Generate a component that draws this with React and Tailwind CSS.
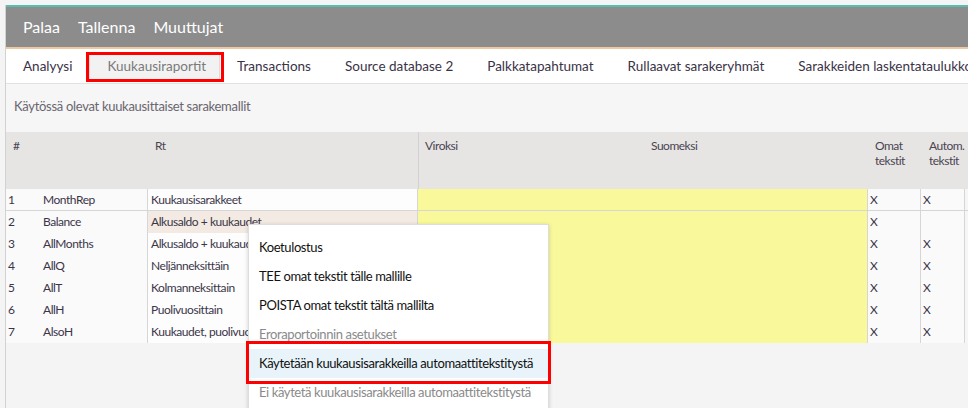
import React from "react";

const font = { fontFamily: 'Lato, "Open Sans", sans-serif' };

const rows = [
  { n: "1", code: "MonthRep", rt: "Kuukausisarakkeet", omat: "X", autom: "X" },
  { n: "2", code: "Balance", rt: "Alkusaldo + kuukaudet", omat: "X", autom: "", hover: true },
  { n: "3", code: "AllMonths", rt: "Alkusaldo + kuukaudet", omat: "X", autom: "X" },
  { n: "4", code: "AllQ", rt: "Neljänneksittäin", omat: "X", autom: "X" },
  { n: "5", code: "AllT", rt: "Kolmanneksittain", omat: "X", autom: "X" },
  { n: "6", code: "AllH", rt: "Puolivuosittain", omat: "X", autom: "X" },
  { n: "7", code: "AlsoH", rt: "Kuukaudet, puolivuosittain", omat: "X", autom: "X" },
];

const tabs = [
  "Analyysi",
  "Kuukausiraportit",
  "Transactions",
  "Source database 2",
  "Palkkatapahtumat",
  "Rullaavat sarakeryhmät",
  "Sarakkeiden laskentataulukko",
];

function Row({ r, first }) {
  return (
    <div
      className={
        "flex text-[12px] tracking-[-0.45px] text-[#3b3548] leading-[21px] " +
        (first ? "h-[22px] border-b border-[#d6d6d6]" : "h-[22px]")
      }
    >
      <div className="w-[31px] shrink-0 bg-[#fafafa] pl-[2px]">{r.n}</div>
      <div className="w-[111px] shrink-0 bg-[#fafafa] pl-[6px] border-r border-[#d6d6d6]">
        {r.code}
      </div>
      <div
        className={
          "w-[270px] shrink-0 pl-[3px] whitespace-nowrap overflow-hidden border-r border-[#d6d6d6] " +
          (r.hover ? "bg-[#f3ebe3]" : "bg-[#fdfdfd]")
        }
      >
        {r.rt}
      </div>
      <div className="w-[450px] shrink-0 bg-[#f9f99b] border-r border-[#d6d6d6]" />
      <div className="w-[53px] shrink-0 bg-[#fafafa] pl-[2px] border-r border-[#d6d6d6]">
        {r.omat}
      </div>
      <div className="w-[44px] shrink-0 bg-[#fafafa] pl-[2px] border-r border-[#d6d6d6]">
        {r.autom}
      </div>
    </div>
  );
}

export default function App() {
  return (
    <div
      className="relative w-[968px] h-[408px] overflow-hidden bg-[#f4f4f4] pl-[5px] pt-[5px]"
      style={font}
    >
      <div className="h-full border-l border-[#d2d2d2] bg-[#f5f6f5] flex flex-col">
        {/* top bar */}
        <div className="h-[44px] shrink-0 bg-[#8c8c8c] border-t-2 border-t-[#5bbcb0] border-b-2 border-b-[#efc8a0] flex items-center pl-[17px] gap-[18px] text-white text-[16px]">
          <span>Palaa</span>
          <span>Tallenna</span>
          <span>Muuttujat</span>
        </div>
        {/* tabs */}
        <div className="h-[35px] shrink-0 bg-white border-b border-[#e2e2e2] flex items-center whitespace-nowrap overflow-hidden text-[13.5px] text-[#3a3346]">
          {tabs.map((t, i) =>
            i === 1 ? (
              <div
                key={t}
                className="relative h-[28px] flex items-center pl-[17px] pr-[13px] bg-[#f2f2f2] border border-[#dcdcdc] text-[#7a7a7a]"
              >
                {t}
                <div className="absolute -left-[4px] -right-[5px] -top-[1px] -bottom-[3px] border-[3px] border-[#ff0000]" />
              </div>
            ) : (
              <div key={t} className="h-[28px] flex items-center px-[17px]">
                {t}
              </div>
            )
          )}
        </div>
        {/* subtitle */}
        <div className="h-[48px] shrink-0 flex items-center pl-[8px] pb-[2px] text-[13px] tracking-[-0.3px] text-[#6a6570]">
          Käytössä olevat kuukausittaiset sarakemallit
        </div>
        {/* table header */}
        <div className="h-[57px] shrink-0 bg-[#e6e5e3] flex text-[12px] tracking-[-0.5px] text-[#4a4452] leading-[15px]">
          <div className="w-[142px] shrink-0 pl-[7px] pt-[6px]">#</div>
          <div className="w-[270px] shrink-0 pl-[7px] pt-[6px]">Rt</div>
          <div className="w-[451px] shrink-0 border-l border-[#d2d2d2] flex pt-[6px]">
            <div className="w-[226px] pl-[6px]">Viroksi</div>
            <div className="pl-[6px]">Suomeksi</div>
          </div>
          <div className="w-[53px] shrink-0 pl-[6px] pt-[6px]">
            Omat
            <br />
            tekstit
          </div>
          <div className="flex-1 pl-[7px] pt-[6px]">
            Autom.
            <br />
            tekstit
          </div>
        </div>
        {/* rows */}
        <div className="shrink-0">
          {rows.map((r, i) => (
            <Row key={r.n} r={r} first={i === 0} />
          ))}
        </div>
        <div className="flex-1 bg-[#f4f4f4]" />
      </div>

      {/* context menu */}
      <div className="absolute left-[248px] top-[224px] w-[301px] h-[200px] bg-white border border-[#dddddd] shadow-[0_1px_4px_rgba(0,0,0,0.18)] pt-[8px] text-[13px] tracking-[-0.4px] whitespace-nowrap">
        <div className="h-[29px] flex items-center pl-[10px] text-[#111]">Koetulostus</div>
        <div className="h-[29px] flex items-center pl-[10px] text-[#111]">
          TEE omat tekstit tälle mallille
        </div>
        <div className="h-[29px] flex items-center pl-[10px] text-[#111]">
          POISTA omat tekstit tältä mallilta
        </div>
        <div className="h-[29px] flex items-center pl-[10px] text-[#8a8a8a]">
          Eroraportoinnin asetukset
        </div>
        <div className="relative h-[29px] flex items-center pl-[10px] text-[#111] bg-[#e8f4fa]">
          Käytetään kuukausisarakkeilla automaattitekstitystä
          <div className="absolute -left-[3px] -right-[3px] -top-[8px] -bottom-[6px] border-[3px] border-[#ff0000]" />
        </div>
        <div className="h-[29px] flex items-center pl-[10px] text-[#8a8a8a]">
          Ei käytetä kuukausisarakkeilla automaattitekstitystä
        </div>
      </div>
    </div>
  );
}
